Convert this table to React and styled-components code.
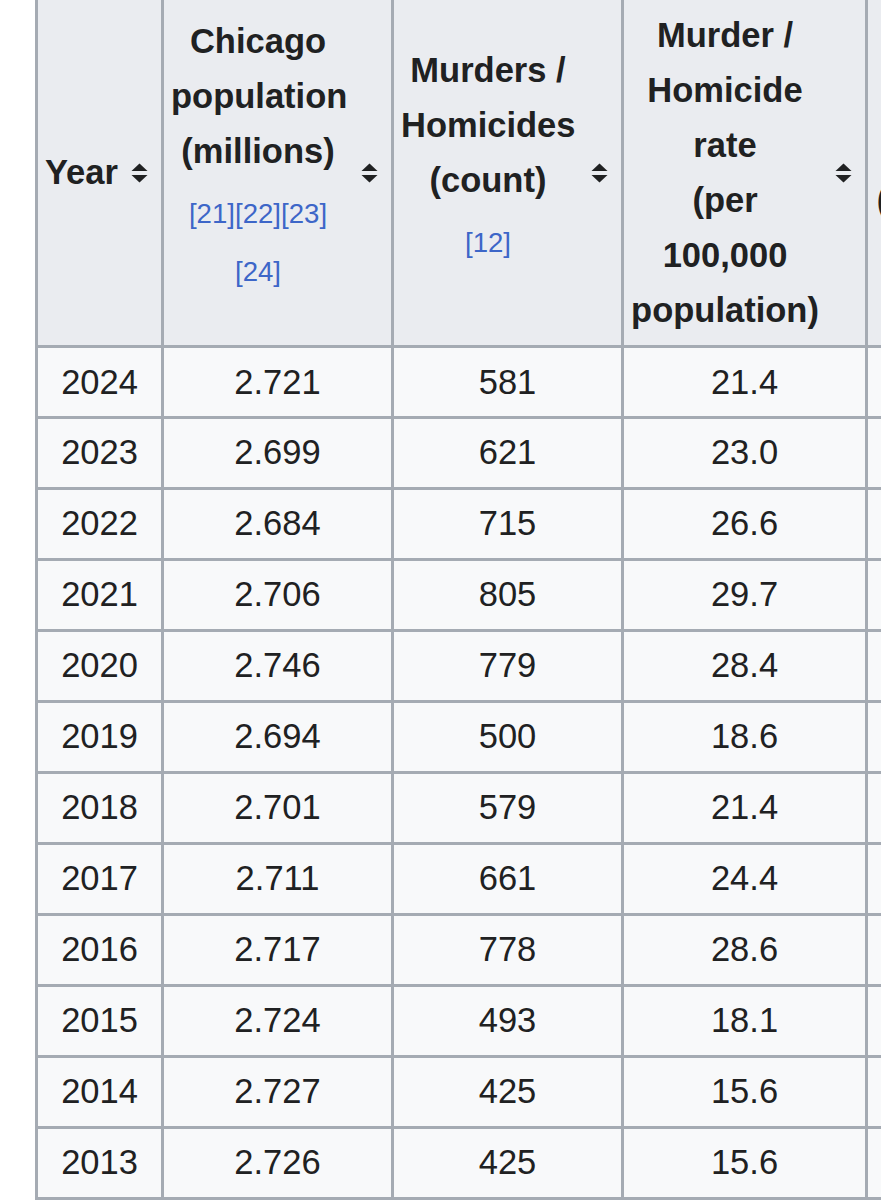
import React from "react";
import styled, { createGlobalStyle } from "styled-components";

const GlobalStyle = createGlobalStyle`
  html, body {
    margin: 0;
    padding: 0;
    background: #ffffff;
    overflow: hidden;
  }
  body {
    font-family: "Liberation Sans", Arial, sans-serif;
    color: #202122;
  }
`;

const Page = styled.div`
  padding-left: 35px;
  margin-top: -3px;
  width: max-content;
`;

const Table = styled.table`
  border-collapse: collapse;
  table-layout: fixed;
  width: 1089px;
  font-size: 34.5px;
  line-height: 1.6;
  color: #202122;
`;

const Col = styled.col`
  width: ${(p) => p.$w}px;
`;

const Th = styled.th`
  background: #eaecf0;
  border: 3px solid #a5abb3;
  padding: 7.5px 13.5px 6.5px 7px;
  font-weight: 700;
  text-align: center;
  vertical-align: middle;
`;

const HeadInner = styled.div`
  display: flex;
  align-items: center;
`;

const Label = styled.div`
  flex: 1;
  min-width: 0;
  text-align: center;
  white-space: nowrap;
`;

const Refs = styled.div`
  padding-bottom: 37px;
  font-size: 27.6px;
  font-weight: 400;
`;

const RefLine = styled.div`
  padding-top: 12px;
  line-height: 46px;
`;

const RefLink = styled.a`
  color: #3d66c8;
  text-decoration: none;
`;

const SortButton = styled.span`
  flex: none;
  display: flex;
  width: 17px;
  height: 20px;
  margin-left: 15.5px;
  color: #202122;
`;

const Td = styled.td`
  background: #f8f9fa;
  border: 3px solid #a5abb3;
  padding: 6.4px 8px;
  text-align: center;
  vertical-align: middle;
  white-space: nowrap;
  overflow: hidden;
`;

const SortIcon = () => (
  <SortButton aria-hidden="true">
    <svg width="17" height="20" viewBox="0 0 17 20">
      <path d="M8.5 0.5 L16.5 8 L0.5 8 Z" fill="currentColor" />
      <path d="M0.5 12 L16.5 12 L8.5 19.5 Z" fill="currentColor" />
    </svg>
  </SortButton>
);

const Ref = ({ n }) => <RefLink href="#">[{n}]</RefLink>;

const Lines = ({ items }) =>
  items.map((t, i) => (
    <React.Fragment key={t}>
      {i > 0 && <br />}
      {t}
    </React.Fragment>
  ));

const rows = [
  ["2024", "2.721", "581", "21.4"],
  ["2023", "2.699", "621", "23.0"],
  ["2022", "2.684", "715", "26.6"],
  ["2021", "2.706", "805", "29.7"],
  ["2020", "2.746", "779", "28.4"],
  ["2019", "2.694", "500", "18.6"],
  ["2018", "2.701", "579", "21.4"],
  ["2017", "2.711", "661", "24.4"],
  ["2016", "2.717", "778", "28.6"],
  ["2015", "2.724", "493", "18.1"],
  ["2014", "2.727", "425", "15.6"],
  ["2013", "2.726", "425", "15.6"],
  ["2012", "2.715", "500", "18.4"],
];

export default function App() {
  return (
    <>
      <GlobalStyle />
      <Page>
        <Table>
          <colgroup>
            <Col $w={126} />
            <Col $w={230} />
            <Col $w={230} />
            <Col $w={244} />
            <Col $w={259} />
          </colgroup>
          <thead>
            <tr>
              <Th>
                <HeadInner>
                  <Label>Year</Label>
                  <SortIcon />
                </HeadInner>
              </Th>
              <Th>
                <HeadInner>
                  <Label>
                    <Lines items={["Chicago", "population", "(millions)"]} />
                    <Refs>
                      <RefLine>
                        <Ref n="21" />
                        <Ref n="22" />
                        <Ref n="23" />
                      </RefLine>
                      <RefLine>
                        <Ref n="24" />
                      </RefLine>
                    </Refs>
                  </Label>
                  <SortIcon />
                </HeadInner>
              </Th>
              <Th>
                <HeadInner>
                  <Label>
                    <Lines items={["Murders /", "Homicides", "(count)"]} />
                    <Refs>
                      <RefLine>
                        <Ref n="12" />
                      </RefLine>
                    </Refs>
                  </Label>
                  <SortIcon />
                </HeadInner>
              </Th>
              <Th>
                <HeadInner>
                  <Label>
                    <Lines
                      items={[
                        "Murder /",
                        "Homicide",
                        "rate",
                        "(per",
                        "100,000",
                        "population)",
                      ]}
                    />
                  </Label>
                  <SortIcon />
                </HeadInner>
              </Th>
              <Th>
                <HeadInner>
                  <Label>
                    <Lines
                      items={[
                        "Violent",
                        "crime",
                        "rate",
                        "(per 100,000",
                        "residents,",
                        "annual)",
                      ]}
                    />
                  </Label>
                  <SortIcon />
                </HeadInner>
              </Th>
            </tr>
          </thead>
          <tbody>
            {rows.map((r) => (
              <tr key={r[0]}>
                <Td>{r[0]}</Td>
                <Td>{r[1]}</Td>
                <Td>{r[2]}</Td>
                <Td>{r[3]}</Td>
                <Td />
              </tr>
            ))}
          </tbody>
        </Table>
      </Page>
    </>
  );
}
